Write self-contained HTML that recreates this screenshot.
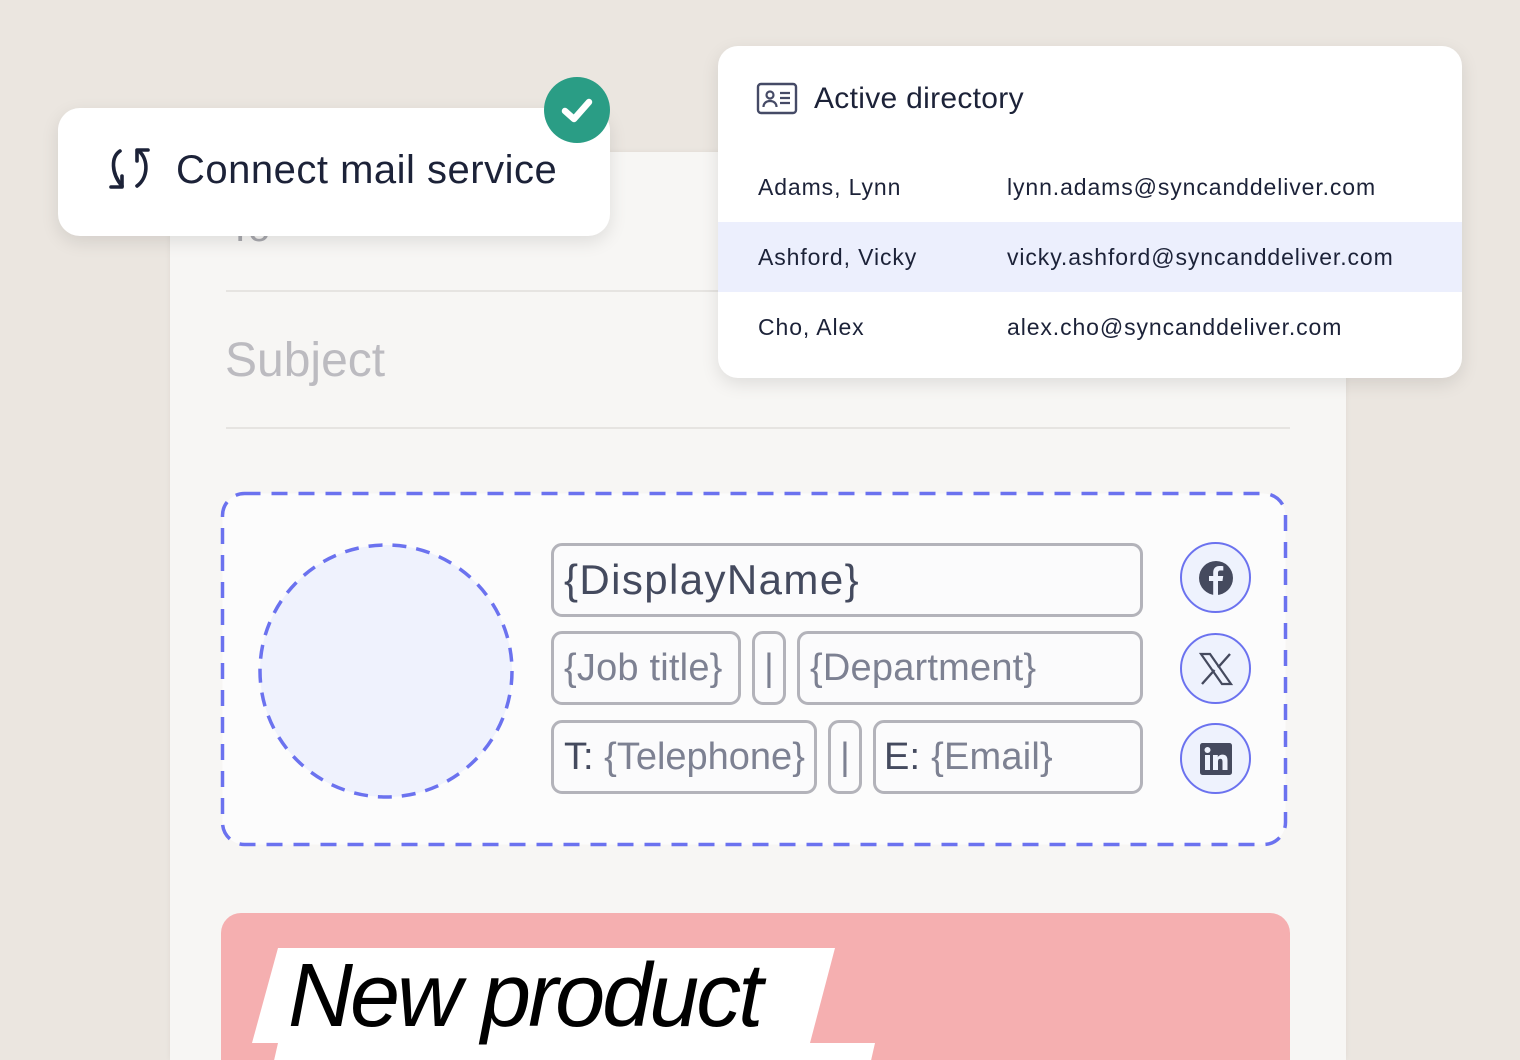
<!DOCTYPE html>
<html><head><meta charset="utf-8"><style>
*{margin:0;padding:0;box-sizing:border-box}
html,body{width:1520px;height:1060px;overflow:hidden}
body{background:#ebe6e0;font-family:"Liberation Sans",sans-serif;position:relative;color:#1c2238}
.abs{position:absolute}
.paper{left:170px;top:152px;width:1176px;height:908px;background:#f7f6f4;box-shadow:0 0 6px rgba(0,0,0,.05)}
.line{height:2px;background:#e6e4e1;left:226px;width:1064px}
.field{border:3px solid #b3b3ba;border-radius:11px;background:#fbfbfc;font-size:38px;color:#7d8192;display:flex;align-items:center;padding-left:10px;letter-spacing:0.2px;white-space:nowrap;overflow:hidden}
.soc{width:71px;height:71px;border-radius:50%;border:2.5px solid #6b72ef;background:#eef2fd;left:1180px;display:flex;align-items:center;justify-content:center}
.card{background:#fff;box-shadow:0 6px 18px rgba(0,0,0,.1)}
.row{position:absolute;left:0;width:744px;height:70px;font-size:23px;letter-spacing:0.9px}
.row span{position:absolute;top:22px}
</style></head><body>
<div class="abs paper"></div>
<div class="abs" style="left:228px;top:206px;font-size:40px;color:#a9a9ae">To</div>
<div class="abs line" style="top:290px"></div>
<div class="abs" style="left:225px;top:333px;font-size:48px;color:#bcbbc0">Subject</div>
<div class="abs line" style="top:427px"></div>

<svg class="abs" style="left:220px;top:491px" width="1068" height="356"><rect x="2.5" y="2.5" width="1063" height="351" rx="22" fill="#fcfcfc" stroke="#6b72ef" stroke-width="3.5" stroke-dasharray="16 11"/></svg>
<svg class="abs" style="left:255px;top:540px" width="262" height="262"><circle cx="131" cy="131" r="126" fill="#eff2fd" stroke="#6b72ef" stroke-width="3.5" stroke-dasharray="14 10"/></svg>

<div class="abs field" style="left:551px;top:543px;width:592px;height:74px;color:#444a5e;font-size:42px;letter-spacing:1.4px">{DisplayName}</div>
<div class="abs field" style="left:551px;top:631px;width:190px;height:74px">{Job title}</div>
<div class="abs field" style="left:752px;top:631px;width:34px;height:74px;padding:0;justify-content:center;font-weight:300">|</div>
<div class="abs field" style="left:797px;top:631px;width:346px;height:74px">{Department}</div>
<div class="abs field" style="left:551px;top:720px;width:266px;height:74px;letter-spacing:0"><span style="color:#444a5e">T:&nbsp;</span>{Telephone}</div>
<div class="abs field" style="left:828px;top:720px;width:34px;height:74px;padding:0;justify-content:center">|</div>
<div class="abs field" style="left:873px;top:720px;width:270px;height:74px;padding-left:8px"><span style="color:#444a5e">E:&nbsp;</span>{Email}</div>

<div class="abs soc" style="top:542px"><svg width="38" height="38" viewBox="0 0 38 38"><circle cx="19" cy="19" r="17" fill="#454a5e"/><path d="M21 36V22h4.5l.7-5H21v-3c0-1.5.5-2.5 2.6-2.5h2.7V7.2c-.5-.1-2-.2-3.8-.2-3.8 0-6.3 2.3-6.3 6.5V17h-4.2v5h4.2v14z" fill="#eef2fd"/></svg></div>
<div class="abs soc" style="top:633px"><svg width="36" height="36" viewBox="0 0 36 36"><path d="M3 3h9l21 30h-9z" fill="none" stroke="#454a5e" stroke-width="2.2"/><path d="M32 3L20 16.5M4 33l12.5-14" stroke="#454a5e" stroke-width="2.4"/></svg></div>
<div class="abs soc" style="top:723px"><svg width="34" height="34" viewBox="0 0 34 34"><rect x="1" y="1" width="32" height="32" rx="2.5" fill="#454a5e"/><rect x="6" y="13" width="5" height="15" fill="#eef2fd"/><circle cx="8.5" cy="8" r="3" fill="#eef2fd"/><path d="M14 13h4.8v2.2c.8-1.5 2.5-2.6 4.7-2.6 4 0 5 2.6 5 6V28h-5v-8c0-1.8-.4-3.2-2.2-3.2S19 18.2 19 20v8h-5z" fill="#eef2fd"/></svg></div>

<div class="abs" style="left:221px;top:913px;width:1069px;height:147px;background:#f5afb0;border-radius:20px 20px 0 0"></div>
<svg class="abs" style="left:240px;top:940px" width="660" height="120"><polygon points="38,8 595,8 570,103 12,103" fill="#fff"/><polygon points="38,103 635,103 630,125 33,125" fill="#fff"/></svg>
<div class="abs" style="left:288px;top:946px;font-size:90px;font-style:italic;letter-spacing:-3px;color:#000;line-height:100px">New product</div>

<div class="abs card" style="left:58px;top:108px;width:552px;height:128px;border-radius:22px"></div>
<svg class="abs" style="left:100px;top:140px" width="60" height="60" viewBox="0 0 60 60"><g fill="none" stroke="#1c2238" stroke-width="3.6" stroke-linecap="round" stroke-linejoin="round"><path d="M20 11C11 17 11 33 22 46"/><path d="M11 47h11V36"/><path d="M39 11c10 9 9 27-2 35"/><path d="M48 11H37v11" transform="translate(0,-1)"/></g></svg>
<div class="abs" style="left:176px;top:148px;font-size:40px;letter-spacing:0.5px;color:#1c2238">Connect mail service</div>
<div class="abs" style="left:544px;top:77px;width:66px;height:66px;border-radius:50%;background:#2a9d85"></div>
<svg class="abs" style="left:544px;top:77px" width="66" height="66"><path d="M21 34l9 8 15-17" fill="none" stroke="#fff" stroke-width="6.5" stroke-linecap="round" stroke-linejoin="round"/></svg>

<div class="abs card" style="left:718px;top:46px;width:744px;height:332px;border-radius:20px;overflow:hidden">
 <svg class="abs" style="left:38px;top:36px" width="42" height="34" viewBox="0 0 42 34"><rect x="2" y="2" width="38" height="29" rx="3" fill="none" stroke="#454a66" stroke-width="2.4"/><circle cx="14" cy="13" r="3.5" fill="none" stroke="#454a66" stroke-width="2.2"/><path d="M7.5 25c0-4 3-6 6.5-6s6.5 2 6.5 6" fill="none" stroke="#454a66" stroke-width="2.2"/><path d="M24 11h10M24 16h10M24 21h10" stroke="#454a66" stroke-width="2.2"/></svg>
 <div class="abs" style="left:96px;top:36px;font-size:30px;letter-spacing:0.3px;color:#1c2238">Active directory</div>
 <div class="row" style="top:106px"><span style="left:40px">Adams, Lynn</span><span style="left:289px">lynn.adams@syncanddeliver.com</span></div>
 <div class="row" style="top:176px;background:#eceffd"><span style="left:40px">Ashford, Vicky</span><span style="left:289px">vicky.ashford@syncanddeliver.com</span></div>
 <div class="row" style="top:246px"><span style="left:40px">Cho, Alex</span><span style="left:289px">alex.cho@syncanddeliver.com</span></div>
</div>
</body></html>
